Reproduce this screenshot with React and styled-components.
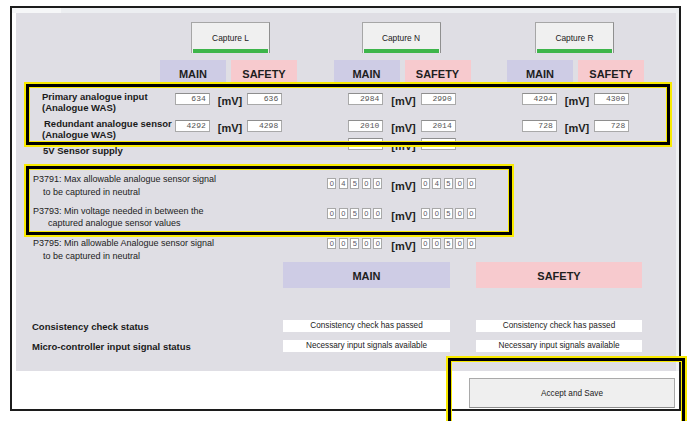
import React from "react";
import styled, { createGlobalStyle } from "styled-components";

const GlobalStyle = createGlobalStyle`
  html, body {
    margin: 0;
    padding: 0;
    overflow: hidden;
    background: #fff;
  }
  body {
    font-family: "Liberation Sans", Arial, sans-serif;
    color: #1e1e1e;
  }
`;

const Page = styled.div`
  position: relative;
  width: 689px;
  height: 421px;
  padding: 6px 0 0 10px;
  box-sizing: border-box;
`;

const Frame = styled.div`
  width: 671px;
  height: 405px;
  border: 2px solid #1c1c1c;
  box-sizing: border-box;
  background: #fff;
  display: flex;
  flex-direction: column;
`;

const TopStrip = styled.div`
  height: 5px;
  background: #eceef1;
  display: flex;
`;

const Tab = styled.div`
  width: 49px;
  background: #f6f7f8;
`;

const Body = styled.div`
  display: flex;
`;

const Panel = styled.div`
  margin-left: 4px;
  width: 660px;
  height: 358px;
  background: #dfdee4;
  display: flex;
  flex-direction: column;
`;

const RightEdge = styled.div`
  width: 3px;
  background: #eef0f2;
`;

const Groups = styled.div`
  display: grid;
  grid-template-columns: 107.5px repeat(3, 137px);
  column-gap: 36.5px;
  margin-top: ${p => p.$mt || 0}px;
  height: ${p => (p.$h ? `${p.$h}px` : "auto")};
`;

const Cell = styled.div`
  display: flex;
  justify-content: center;
  align-items: flex-start;
`;

const CaptureButton = styled.div`
  width: 79px;
  height: 31px;
  box-sizing: border-box;
  margin-left: ${p => p.$shift * 2}px;
  border: 1px solid #a6a6a6;
  border-bottom: none;
  border-right-color: #8f8f8f;
  background: #f0f0f0;
  display: flex;
  flex-direction: column;
  font-size: 8.4px;
  color: #222;
`;

const CaptureLabel = styled.div`
  flex: 1;
  display: flex;
  align-items: center;
  justify-content: center;
  padding-top: 3px;
`;

const GreenBar = styled.div`
  height: 4px;
  margin: 0 1px;
  background: #3db54a;
`;

const HeaderPair = styled.div`
  display: grid;
  grid-template-columns: 66px 66px;
  column-gap: 5px;
`;

const Header = styled.div`
  height: 24px;
  padding-top: 4px;
  box-sizing: border-box;
  display: flex;
  align-items: center;
  justify-content: center;
  background: ${p => (p.$safety ? "#f7cace" : "#cecce5")};
  font-weight: bold;
  font-size: 11px;
  color: #1e1e1e;
`;

const RowLabel = styled.div`
  padding-left: ${p => p.$pl || 26}px;
  font-weight: bold;
  font-size: 9.5px;
  line-height: 11px;
  white-space: nowrap;
  color: #1a1a1a;
`;

const LabelLine = styled.div`
  padding-left: ${p => p.$indent || 0}px;
`;

const ValueSet = styled.div`
  display: flex;
  align-items: flex-start;
  margin-top: ${p => p.$mt}px;
`;

const ValueBox = styled.div`
  width: 35px;
  height: 12px;
  box-sizing: border-box;
  border: 1px solid #a9a9a9;
  border-top-color: #8e8e8e;
  background: #fff;
  font-family: "Liberation Mono", "Courier New", monospace;
  font-size: 8px;
  line-height: 10px;
  text-align: right;
  padding-right: 3px;
  color: #555;
`;

const Unit = styled.div`
  font-weight: bold;
  font-size: 11px;
  line-height: 12px;
  padding-top: 2px;
  margin: ${p => (p.$tight ? "0 5px 0 9px" : "0 5px 0 8px")};
  color: #1e1e1e;
`;

const PRow = styled.div`
  display: grid;
  grid-template-columns: 317px 137px;
  height: ${p => p.$h}px;
`;

const PLabel = styled.div`
  padding-left: 17px;
  font-size: 9px;
  line-height: ${p => p.$lh}px;
  white-space: nowrap;
  color: #222;
`;

const DigitSet = styled.div`
  display: flex;
  gap: 2.5px;
`;

const DigitBox = styled.div`
  width: 9px;
  height: 11px;
  box-sizing: border-box;
  border: 1px solid #a8a8a8;
  background: #fff;
  font-size: 7.5px;
  line-height: 9px;
  text-align: center;
  color: #5b5666;
`;

const BottomGrid = styled.div`
  display: grid;
  grid-template-columns: 241px 167px 166px;
  column-gap: 26px;
  row-gap: ${p => p.$gap || 0}px;
  align-items: center;
  margin-top: ${p => p.$mt || 0}px;
`;

const Bar = styled.div`
  height: 26px;
  display: flex;
  align-items: center;
  justify-content: center;
  background: ${p => (p.$safety ? "#f7cace" : "#cecce5")};
  font-weight: bold;
  font-size: 11px;
  padding-top: 2px;
  box-sizing: border-box;
  color: #1e1e1e;
`;

const StatusLabel = styled.div`
  padding-left: 16px;
  font-weight: bold;
  font-size: 9.5px;
  white-space: nowrap;
  color: #1a1a1a;
`;

const StatusBox = styled.div`
  height: 12px;
  background: #fff;
  font-size: 8.2px;
  line-height: 12px;
  text-align: center;
  white-space: nowrap;
  color: #222;
`;

const Footer = styled.div`
  display: flex;
  justify-content: flex-end;
  padding: 7px 4px 0 0;
`;

const AcceptButton = styled.div`
  width: 206px;
  height: 30px;
  box-sizing: border-box;
  border: 1px solid #a9a9a9;
  border-bottom-color: #8c8c8c;
  background: #efefef;
  display: flex;
  align-items: center;
  justify-content: center;
  font-size: 8.2px;
  color: #222;
`;

/* annotation frames drawn over the form */
const Highlight = styled.div`
  position: absolute;
  left: ${p => p.$x}px;
  top: ${p => p.$y}px;
  width: ${p => p.$w}px;
  height: ${p => p.$h}px;
  box-sizing: border-box;
  border: 2px solid #f8ea00;
  box-shadow: inset 0 0 0 3px #000, inset 0 0 0 4px #f8ea00;
  pointer-events: none;
`;

const captures = [
  { label: "Capture L", shift: 2 },
  { label: "Capture N", shift: -1 },
  { label: "Capture R", shift: -1 }
];

const rows = [
  {
    lines: ["Primary analogue input", "(Analogue WAS)"],
    indent: 0,
    values: [["634", "636"], ["2984", "2990"], ["4294", "4300"]]
  },
  {
    lines: ["Redundant analogue sensor", "(Analogue WAS)"],
    indent: 2,
    values: [["4292", "4298"], ["2010", "2014"], ["728", "728"]]
  }
];

const params = [
  {
    lines: ["P3791: Max allowable analogue sensor signal", "to be captured in neutral"],
    indent: 10,
    lh: 13,
    h: 33,
    mt: 5,
    digits: "04500"
  },
  {
    lines: ["P3793: Min voltage needed in between the", "captured analogue sensor values"],
    indent: 15,
    lh: 11.5,
    h: 31,
    mt: 2,
    digits: "00500"
  },
  {
    lines: ["P3795: Min allowable Analogue sensor signal", "to be captured in neutral"],
    indent: 10,
    lh: 13,
    h: 25,
    mt: 1,
    digits: "00500"
  }
];

const Digits = ({ value }) => (
  <DigitSet>
    {value.split("").map((d, i) => (
      <DigitBox key={i}>{d}</DigitBox>
    ))}
  </DigitSet>
);

const Values = ({ pair, mt = 2 }) => (
  <ValueSet $mt={mt}>
    <ValueBox>{pair[0]}</ValueBox>
    <Unit>[mV]</Unit>
    <ValueBox>{pair[1]}</ValueBox>
  </ValueSet>
);

export default function App() {
  return (
    <Page>
      <GlobalStyle />
      <Frame>
        <TopStrip>
          <Tab />
        </TopStrip>
        <Body>
          <Panel>
            <Groups $mt={9}>
              <div />
              {captures.map(c => (
                <Cell key={c.label}>
                  <CaptureButton $shift={c.shift}>
                    <CaptureLabel>{c.label}</CaptureLabel>
                    <GreenBar />
                  </CaptureButton>
                </Cell>
              ))}
            </Groups>

            <Groups $mt={7}>
              <div />
              {captures.map(c => (
                <HeaderPair key={c.label}>
                  <Header>MAIN</Header>
                  <Header $safety>SAFETY</Header>
                </HeaderPair>
              ))}
            </Groups>

            {rows.map((r, i) => (
              <Groups key={i} $mt={i === 0 ? 7 : 0} $h={27}>
                <RowLabel $pl={26}>
                  <LabelLine $indent={r.indent}>{r.lines[0]}</LabelLine>
                  <LabelLine>{r.lines[1]}</LabelLine>
                </RowLabel>
                {r.values.map((v, j) => (
                  <Cell key={j}>
                    <Values pair={v} />
                  </Cell>
                ))}
              </Groups>
            ))}

            <Groups $h={11}>
              <RowLabel $pl={27}>5V Sensor supply</RowLabel>
              <Cell />
              <Cell>
                <Values pair={["3007", "3015"]} mt={-7} />
              </Cell>
              <Cell />
            </Groups>

            <div style={{ height: 17 }} />

            {params.map(p => (
              <PRow key={p.lines[0]} $h={p.h}>
                <PLabel $lh={p.lh}>
                  <LabelLine>{p.lines[0]}</LabelLine>
                  <LabelLine $indent={p.indent}>{p.lines[1]}</LabelLine>
                </PLabel>
                <Cell>
                  <ValueSet $mt={p.mt}>
                    <Digits value={p.digits} />
                    <Unit $tight>[mV]</Unit>
                    <Digits value={p.digits} />
                  </ValueSet>
                </Cell>
              </PRow>
            ))}

            <BottomGrid>
              <div />
              <Bar>MAIN</Bar>
              <Bar $safety>SAFETY</Bar>
            </BottomGrid>

            <BottomGrid $mt={32} $gap={8}>
              <StatusLabel>Consistency check status</StatusLabel>
              <StatusBox>Consistency check has passed</StatusBox>
              <StatusBox>Consistency check has passed</StatusBox>
              <StatusLabel>Micro-controller input signal status</StatusLabel>
              <StatusBox>Necessary input signals available</StatusBox>
              <StatusBox>Necessary input signals available</StatusBox>
            </BottomGrid>
          </Panel>
          <RightEdge />
        </Body>
        <Footer>
          <AcceptButton>Accept and Save</AcceptButton>
        </Footer>
      </Frame>

      <Highlight $x={24} $y={82} $w={648} $h={65} />
      <Highlight $x={24} $y={164} $w={490} $h={73} />
      <Highlight $x={446} $y={356} $w={241} $h={80} />
    </Page>
  );
}
